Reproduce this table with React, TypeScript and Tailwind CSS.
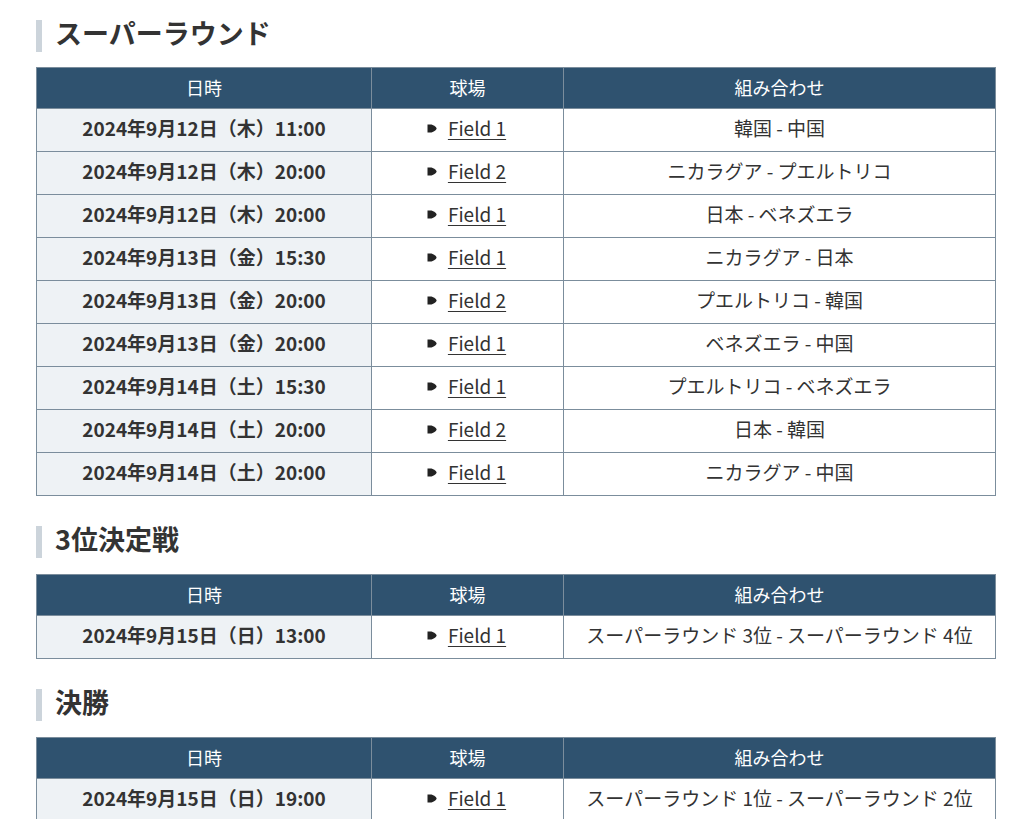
import React from "react";

type Row = { date: string; field: string; match: string };

const superRound: Row[] = [
  { date: "2024年9月12日（木）11:00", field: "Field 1", match: "韓国 - 中国" },
  { date: "2024年9月12日（木）20:00", field: "Field 2", match: "ニカラグア - プエルトリコ" },
  { date: "2024年9月12日（木）20:00", field: "Field 1", match: "日本 - ベネズエラ" },
  { date: "2024年9月13日（金）15:30", field: "Field 1", match: "ニカラグア - 日本" },
  { date: "2024年9月13日（金）20:00", field: "Field 2", match: "プエルトリコ - 韓国" },
  { date: "2024年9月13日（金）20:00", field: "Field 1", match: "ベネズエラ - 中国" },
  { date: "2024年9月14日（土）15:30", field: "Field 1", match: "プエルトリコ - ベネズエラ" },
  { date: "2024年9月14日（土）20:00", field: "Field 2", match: "日本 - 韓国" },
  { date: "2024年9月14日（土）20:00", field: "Field 1", match: "ニカラグア - 中国" },
];

const third: Row[] = [
  { date: "2024年9月15日（日）13:00", field: "Field 1", match: "スーパーラウンド 3位 - スーパーラウンド 4位" },
];

const final: Row[] = [
  { date: "2024年9月15日（日）19:00", field: "Field 1", match: "スーパーラウンド 1位 - スーパーラウンド 2位" },
];

function Bullet() {
  return (
    <svg width="10" height="9" viewBox="0 0 10 9" className="shrink-0">
      <path d="M0.5 0.5 L4.5 0.5 Q9.5 2.5 9.5 4.5 Q9.5 6.5 4.5 8.5 L0.5 8.5 Z" fill="#222" />
    </svg>
  );
}

function Heading({ children }: { children: React.ReactNode }) {
  return (
    <div className="flex items-center h-[32px] border-l-[6px] border-[#ccd4db] pl-[13px]">
      <h2 className="text-[27px] font-bold text-[#333] leading-none -mt-[7px]">{children}</h2>
    </div>
  );
}

function ScheduleTable({ rows }: { rows: Row[] }) {
  return (
    <table className="w-[959px] border-collapse table-fixed text-[19px] text-[#333]">
      <colgroup>
        <col className="w-[335px]" />
        <col className="w-[192px]" />
        <col className="w-[432px]" />
      </colgroup>
      <thead>
        <tr className="h-[41px] bg-[#2f526f] text-white">
          <th className="border border-[#7b8d9c] font-normal text-[18px] pb-[2px]">日時</th>
          <th className="border border-[#7b8d9c] font-normal text-[18px] pb-[2px]">球場</th>
          <th className="border border-[#7b8d9c] font-normal text-[18px] pb-[2px]">組み合わせ</th>
        </tr>
      </thead>
      <tbody>
        {rows.map((r, i) => (
          <tr key={i} className="h-[43px]">
            <td className="border border-[#7b8d9c] bg-[#eef2f5] text-center font-bold pb-[4px]">{r.date}</td>
            <td className="border border-[#7b8d9c] bg-white pb-[4px]">
              <div className="flex items-center justify-center gap-[11px] pr-[2px]">
                <Bullet />
                <a href="#" className="underline underline-offset-[3px] text-[#333]">{r.field}</a>
              </div>
            </td>
            <td className="border border-[#7b8d9c] bg-white text-center pb-[4px]">{r.match}</td>
          </tr>
        ))}
      </tbody>
    </table>
  );
}

export default function App() {
  return (
    <div
      className="bg-white w-[1021px] h-[819px] overflow-hidden pl-[36px] pt-[20px]"
      style={{ fontFamily: '"Noto Sans CJK JP", "Noto Sans", sans-serif' }}
    >
      <Heading>スーパーラウンド</Heading>
      <div className="mt-[15px]">
        <ScheduleTable rows={superRound} />
      </div>
      <div className="mt-[30px]">
        <Heading>3位決定戦</Heading>
      </div>
      <div className="mt-[16px]">
        <ScheduleTable rows={third} />
      </div>
      <div className="mt-[30px]">
        <Heading>決勝</Heading>
      </div>
      <div className="mt-[16px]">
        <ScheduleTable rows={final} />
      </div>
    </div>
  );
}
